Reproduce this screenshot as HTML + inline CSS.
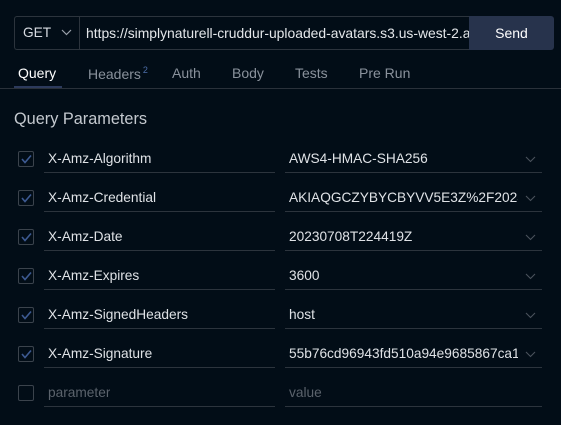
<!DOCTYPE html>
<html><head><meta charset="utf-8"><style>
*{margin:0;padding:0;box-sizing:border-box}
body{width:561px;height:425px;background:#020d17;font-family:"Liberation Sans",sans-serif;position:relative;overflow:hidden;color:#d8dce2}
.a{position:absolute;white-space:nowrap}
.ul{position:absolute;height:1px;background:#2c343d}
.cb{position:absolute;width:16px;height:16px;border:1px solid #3b434c;border-radius:2px}
.t{position:absolute;font-size:13.7px;line-height:16px;white-space:nowrap;overflow:hidden}
</style></head><body>
<div class="a" style="left:14px;top:16px;width:456px;height:34px;border:1px solid #2c343d;border-right:none;border-radius:3px 0 0 3px"></div>
<div class="a" style="left:79px;top:16px;width:1px;height:34px;background:#2c343d"></div>
<div class="a" style="left:23px;top:25px;font-size:13.7px;color:#d8dce2">GET</div>
<svg class="a" style="left:61px;top:29px" width="11" height="7"><path d="M1 1 L5.5 5.5 L10 1" stroke="#9aa1aa" fill="none" stroke-width="1.2"/></svg>
<div class="a" style="left:86px;top:25px;font-size:13.9px;width:383px;overflow:hidden;color:#e4e7ea">https://simplynaturell-cruddur-uploaded-avatars.s3.us-west-2.amazonaws.com</div>
<div class="a" style="left:469px;top:16px;width:85px;height:34px;background:#27334c;border-radius:0 3px 3px 0;color:#fff;font-size:14px;text-align:center;line-height:34px">Send</div>
<div class="a" style="left:18px;top:65px;font-size:14px;color:#fff">Query</div>
<div class="a" style="left:88px;top:65px;font-size:14px;color:#8a929c">Headers<sup style="font-size:9px;color:#4d6ea8;margin-left:2px;vertical-align:6px">2</sup></div>
<div class="a" style="left:172px;top:65px;font-size:14px;color:#8a929c">Auth</div>
<div class="a" style="left:232px;top:65px;font-size:14px;color:#8a929c">Body</div>
<div class="a" style="left:295px;top:65px;font-size:14px;color:#8a929c">Tests</div>
<div class="a" style="left:359px;top:65px;font-size:14px;color:#8a929c">Pre Run</div>
<div class="a" style="left:0;top:88px;width:561px;height:1px;background:#2a313a"></div>
<div class="a" style="left:14px;top:86px;width:48px;height:2px;background:#2c3a5c"></div>
<div class="a" style="left:14px;top:110px;font-size:16.3px;color:#c4c9cf">Query Parameters</div>
<div id="rows"></div>
<script>
var d=[["X-Amz-Algorithm","AWS4-HMAC-SHA256"],["X-Amz-Credential","AKIAQGCZYBYCBYVV5E3Z%2F20230708"],["X-Amz-Date","20230708T224419Z"],["X-Amz-Expires","3600"],["X-Amz-SignedHeaders","host"],["X-Amz-Signature","55b76cd96943fd510a94e9685867ca1"],["parameter","value"]];
var h="";
d.forEach(function(r,i){var y=39*i;var last=i==6;
h+='<div class="cb" style="left:18px;top:'+(151+y)+'px"></div>';
if(!last)h+='<svg class="a" style="left:21px;top:'+(154+y)+'px" width="11" height="10"><path d="M1 5 L4 8.5 L10 1.5" stroke="#3d5a92" fill="none" stroke-width="1.6"/></svg>';
var c=last?'#5b636c':'#dfe2e6';
h+='<div class="t" style="left:48px;top:'+(151+y)+'px;color:'+c+'">'+r[0]+'</div>';
h+='<div class="t" style="left:289px;top:'+(151+y)+'px;width:'+(last?200:229)+'px;color:'+c+'">'+r[1]+'</div>';
if(!last)h+='<svg class="a" style="left:525px;top:'+(156+y)+'px" width="11" height="7"><path d="M1 1 L5.5 5.5 L10 1" stroke="#4a525c" fill="none" stroke-width="1.1"/></svg>';
h+='<div class="ul" style="left:44px;width:231px;top:'+(172+y)+'px"></div>';
h+='<div class="ul" style="left:285px;width:257px;top:'+(172+y)+'px"></div>';
});
document.getElementById("rows").innerHTML=h;
</script>
</body></html>
